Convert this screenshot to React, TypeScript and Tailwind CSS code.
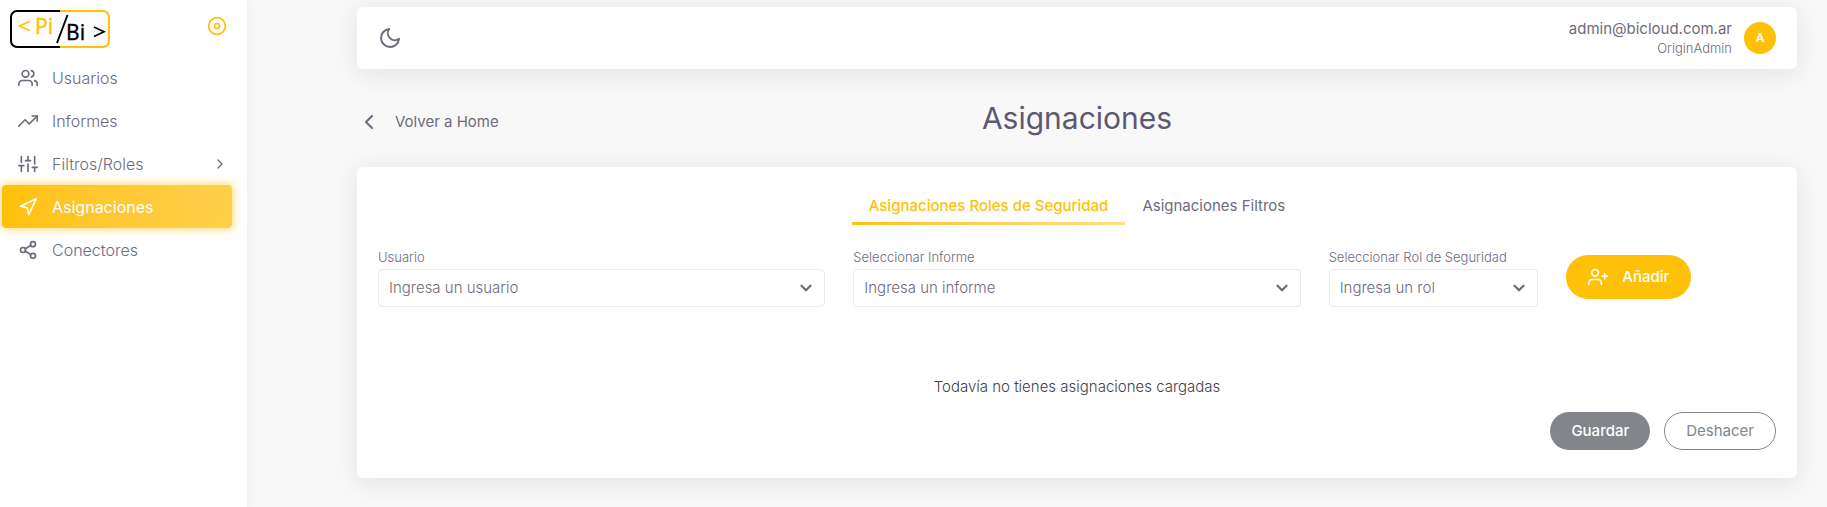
import type { ReactNode } from "react";
import type { IconType } from "react-icons";
import {
  FiChevronDown,
  FiChevronLeft,
  FiChevronRight,
  FiDisc,
  FiMoon,
  FiNavigation,
  FiShare2,
  FiSliders,
  FiTrendingUp,
  FiUserPlus,
  FiUsers,
} from "react-icons/fi";

type NavEntry = { label: string; icon: IconType; active?: boolean; nested?: boolean };

const navEntries: NavEntry[] = [
  { label: "Usuarios", icon: FiUsers },
  { label: "Informes", icon: FiTrendingUp },
  { label: "Filtros/Roles", icon: FiSliders, nested: true },
  { label: "Asignaciones", icon: FiNavigation, active: true },
  { label: "Conectores", icon: FiShare2 },
];

function Logo() {
  return (
    <svg width="102" height="42" viewBox="0 0 102 42" role="img" aria-label="Pi/Bi">
      <rect x="2" y="2" width="98" height="37" rx="6" fill="#fcfcfc" />
      <path d="M49 2H94a6 6 0 0 1 6 6V32a6 6 0 0 1-6 6H49" fill="none" stroke="#ffc107" strokeWidth="2" />
      <path d="M51 2H8a6 6 0 0 0-6 6V32a6 6 0 0 0 6 6H51" fill="none" stroke="#000" strokeWidth="2" />
      <g fontFamily="'Noto Sans', sans-serif" fontSize="21">
        <text x="26" y="25" fill="#ffc107" stroke="#ffc107" strokeWidth="0.300">Pi</text>
        <text x="57" y="31" fill="#000" stroke="#000" strokeWidth="0.300">Bi</text>
      </g>
      <path d="M20.500 12.500L10.500 17L20.500 21.500" fill="none" stroke="#ffc107" strokeWidth="1.700" />
      <path d="M85 18L95 22.800L85 27.600" fill="none" stroke="#000" strokeWidth="1.700" />
      <path d="M48 34L58.500 6" stroke="#000" strokeWidth="2" />
    </svg>
  );
}

function NavLink({ label, icon: Icon, active, nested }: NavEntry) {
  return (
    <a
      href="#"
      aria-current={active ? "page" : undefined}
      className={
        active
          ? "flex h-[43px] items-center gap-3.5 rounded bg-linear-to-r from-[#ffc107] to-[#ffd04a] pr-1 pl-4 text-white shadow-[0_0_10px_1px_rgba(255,193,7,0.6)]"
          : "flex h-[43px] items-center gap-3.5 pr-1 pl-4 text-[#6e6b7b]"
      }
    >
      <Icon className="size-5 shrink-0" />
      <span className={active ? "grow" : "grow font-light"}>{label}</span>
      {nested && <FiChevronRight className="size-4" />}
    </a>
  );
}

function SelectField({ id, label, placeholder, className }: { id: string; label: string; placeholder: string; className: string }) {
  return (
    <div className={className}>
      <label htmlFor={id} className="mb-0.5 block text-[13px] leading-5 font-light whitespace-nowrap">
        {label}
      </label>
      <div className="relative">
        <select
          id={id}
          className="h-[38px] w-full appearance-none rounded border border-[#ebe9f1] bg-white pr-9 pl-2.5 text-[15px] font-light text-[#6e6b7b]"
        >
          <option>{placeholder}</option>
        </select>
        <FiChevronDown className="pointer-events-none absolute top-2.5 right-2.5 size-[18px] stroke-3" />
      </div>
    </div>
  );
}

function Panel({ children, className }: { children: ReactNode; className: string }) {
  return <div className={`rounded-md bg-white shadow-[0_4px_24px_rgba(34,41,47,0.1)] ${className}`}>{children}</div>;
}

export default function App() {
  return (
    <div className="flex min-h-screen bg-[#f8f8f8] font-['Inter',sans-serif] text-[15px] text-[#6e6b7b]">
      <aside className="w-[247px] shrink-0 bg-white shadow-[0_0_15px_rgba(34,41,47,0.05)]">
        <div className="flex h-14 items-start justify-between pt-[9px] pr-5 pl-[9px]">
          <Logo />
          <button type="button" aria-label="Fijar menú" className="mt-[7px] text-[#ffc107]">
            <FiDisc className="size-5" />
          </button>
        </div>
        <nav className="pr-[15px] pl-0.5 text-base">
          {navEntries.map((entry) => (
            <NavLink key={entry.label} {...entry} />
          ))}
        </nav>
      </aside>

      <main className="min-w-0 grow pt-[7px] pr-0 pl-20">
        <div className="mx-auto max-w-[1440px]">
          <Panel className="flex h-[62px] items-center justify-between px-[21px]">
            <button type="button" aria-label="Modo oscuro">
              <FiMoon className="size-6" />
            </button>
            <div className="flex items-center gap-3">
              <div className="text-right">
                <p className="leading-5">admin@bicloud.com.ar</p>
                <p className="text-[13px] leading-[18px] font-light">OriginAdmin</p>
              </div>
              <span className="flex size-8 items-center justify-center rounded-full bg-[#ffc107] text-xs font-semibold text-white">
                A
              </span>
            </div>
          </Panel>

          <header className="grid h-[98px] grid-cols-3 items-center">
            <a href="#" className="flex items-center gap-3.5 pt-2">
              <FiChevronLeft className="size-6" />
              <span>Volver a Home</span>
            </a>
            <h1 className="text-center text-[30px] leading-9 text-[#5e5873]">Asignaciones</h1>
          </header>

          <Panel className="px-[21px] pt-[21px] pb-7">
            <div role="tablist" className="flex justify-center">
              <button type="button" role="tab" aria-selected="true" className="px-[17px] font-medium text-[#ffc107]">
                <span className="flex h-[34px] items-center pt-[3px]">Asignaciones Roles de Seguridad</span>
                <span className="-mx-[17px] block h-[3px] bg-linear-to-r from-[#ffc107] to-[#ffdf80]" />
              </button>
              <button type="button" role="tab" aria-selected="false" className="px-[17px]">
                <span className="flex h-[34px] items-center pt-[3px]">Asignaciones Filtros</span>
                <span className="block h-[3px]" />
              </button>
            </div>

            <form className="mt-[22px] grid grid-cols-12 gap-7">
              <SelectField id="usuario" label="Usuario" placeholder="Ingresa un usuario" className="col-span-4" />
              <SelectField id="informe" label="Seleccionar Informe" placeholder="Ingresa un informe" className="col-span-4" />
              <SelectField id="rol" label="Seleccionar Rol de Seguridad" placeholder="Ingresa un rol" className="col-span-2" />
              <div className="col-span-2 pt-2">
                <button
                  type="button"
                  className="flex h-11 items-center gap-3.5 rounded-full bg-[#ffc107] px-[22px] font-medium text-white"
                >
                  <FiUserPlus className="size-5" />
                  Añadir
                </button>
              </div>
            </form>

            <p className="mt-[70px] text-center leading-5 font-light text-[#3f3f46]">Todavía no tienes asignaciones cargadas</p>

            <div className="mt-[15px] flex justify-end gap-3.5">
              <button type="button" className="h-[38px] rounded-full bg-[#82868b] px-[21px] font-medium text-white">
                Guardar
              </button>
              <button type="button" className="h-[38px] rounded-full border border-[#82868b] px-[21px] text-[#82868b]">
                Deshacer
              </button>
            </div>
          </Panel>
        </div>
      </main>
    </div>
  );
}
